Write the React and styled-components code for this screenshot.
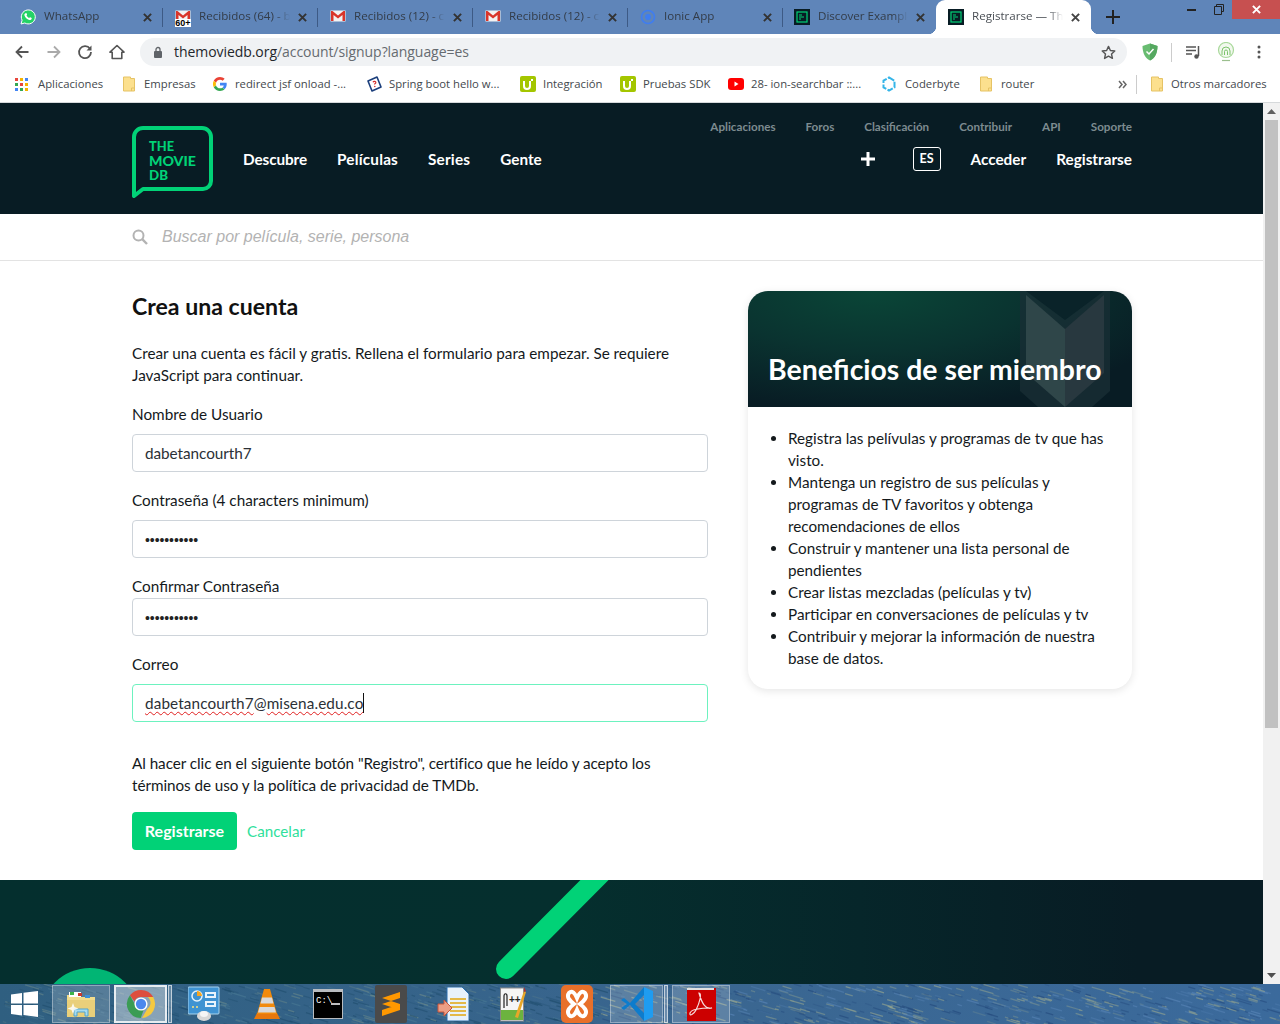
import React from "react";
import styled, { createGlobalStyle } from "styled-components";

const Global = createGlobalStyle`
  html, body { margin: 0; padding: 0; height: 100%; overflow: hidden; background: #fff; }
  * { box-sizing: border-box; }
  #root { width: 1280px; height: 1024px; }
`;
const BODY = `"Lato", "Open Sans", sans-serif`;
const UI = `"Open Sans", "Noto Sans", sans-serif`;

const Screen = styled.div`display:flex;flex-direction:column;width:1280px;height:1024px;overflow:hidden;font-family:${BODY};`;

/* ---------- browser chrome ---------- */
const TabStrip = styled.div`display:flex;align-items:stretch;height:34px;background:#5f85b9;padding-left:8px;flex:none;position:relative;`;
const Tab = styled.div`
  width:${p => p.$w || 155}px;display:flex;align-items:center;padding:0 11px 0 ${p => p.$pl || 12}px;gap:8px;position:relative;
  font:11.6px/16px ${UI};color:#333c48;
  ${p => p.$sep ? `&:after{content:"";position:absolute;right:0;top:8px;height:19px;width:1px;background:#3d5a85;}` : ""}
  ${p => p.$active ? `background:#fff;border-radius:9px 9px 0 0;color:#4a4f55;
    &:before{content:"";position:absolute;left:-8px;bottom:0;width:8px;height:8px;background:radial-gradient(circle at 0 0,transparent 8px,#fff 8.5px);}
    &:after{content:"";position:absolute;right:-8px;bottom:0;width:8px;height:8px;background:radial-gradient(circle at 100% 0,transparent 8px,#fff 8.5px);}` : ""}
`;
const TabTitle = styled.span`
  flex:1;min-width:0;white-space:nowrap;overflow:hidden;padding-bottom:2px;
  -webkit-mask-image:linear-gradient(90deg,#000 84%,transparent 100%);mask-image:linear-gradient(90deg,#000 84%,transparent 100%);
`;
const TabIconBox = styled.span`width:16px;height:16px;flex:none;display:flex;`;
const NewTab = styled.div`width:44px;display:flex;align-items:center;justify-content:center;`;
const WinControls = styled.div`margin-left:auto;display:flex;align-items:flex-start;height:19px;`;
const WinBtn = styled.div`width:${p => p.$w}px;height:19px;display:flex;align-items:center;justify-content:center;background:${p => p.$red ? "#c75050" : "transparent"};`;

const Toolbar = styled.div`display:flex;align-items:center;height:34px;background:#fff;flex:none;padding:4px 0 2px 14px;`;
const NavBtn = styled.div`width:31.5px;height:20px;display:flex;align-items:center;justify-content:flex-start;`;
const Omni = styled.div`
  width:987px;height:28px;border-radius:14px;background:#f0f2f4;display:flex;align-items:center;flex:none;
  padding:0 11px 0 13px;font:14px/18px ${UI};color:#666b70;
  b{font-weight:400;color:#23272b;}
`;
const UrlText = styled.span`margin-left:11px;flex:1;letter-spacing:-.06px;`;
const ExtArea = styled.div`display:flex;align-items:center;margin-left:15px;`;
const ExtDivider = styled.span`width:1px;height:19px;background:#ccc;margin:0 13px 0 13px;`;
const ExtGap = styled.span`width:${p => p.$w}px;flex:none;`;

const Bookmarks = styled.div`display:flex;align-items:center;height:35px;background:#fff;flex:none;padding:0 0 2px 15px;border-bottom:1px solid #d6d9db;font:11.3px/16px ${UI};color:#43484d;`;
const Mark = styled.div`width:${p => p.$w}px;flex:none;display:flex;align-items:center;gap:${p => p.$gap ?? 9}px;white-space:nowrap;svg{flex:none;}`;
const More = styled.div`margin-left:auto;display:flex;align-items:center;padding-right:14px;`;
const MarkDivider = styled.span`width:1px;height:19px;background:#ccc;margin:0 13px 0 9px;`;

/* ---------- site ---------- */
const Viewport = styled.div`flex:1;min-height:0;display:flex;`;
const Page = styled.div`flex:1;min-width:0;overflow:hidden;display:flex;flex-direction:column;background:#fff;`;
const Container = styled.div`width:1000px;margin-left:132px;`;
const SiteHeader = styled.header`height:111px;background:#081c24;flex:none;`;
const HeaderInner = styled(Container)`display:flex;justify-content:space-between;height:111px;`;
const HeaderLeft = styled.div`display:flex;align-items:flex-start;padding-top:23px;`;
const MainNav = styled.nav`display:flex;gap:30px;margin-left:30px;height:66px;align-items:center;`;
const NavLink = styled.span`font:700 15.3px/22px ${BODY};letter-spacing:${p => p.$ls || 0}px;color:#fff;`;
const HeaderRight = styled.div`display:flex;flex-direction:column;align-items:flex-end;`;
const SubNav = styled.div`display:flex;gap:30px;height:48px;align-items:center;`;
const SubLink = styled.span`font:700 11.65px/16px ${BODY};color:#7d8b90;`;
const MainRow = styled.div`display:flex;align-items:center;gap:30px;height:24px;margin-top:-4px;`;
const LangBox = styled.span`width:28px;height:24px;border:1px solid #fff;border-radius:3px;display:flex;align-items:center;justify-content:center;font:700 12.5px/16px ${BODY};color:#fff;margin-left:8px;`;

const SearchBar = styled.div`height:47px;flex:none;border-bottom:1px solid #e3e3e3;`;
const SearchInner = styled(Container)`height:46px;display:flex;align-items:center;gap:14px;font:italic 16px/20px "Liberation Sans",Arial,sans-serif;color:#b3b3b3;`;

const Content = styled(Container)`display:flex;justify-content:space-between;padding-top:30px;height:619px;flex:none;`;
const FormCol = styled.section`width:576px;`;
const Title = styled.h2`margin:-1px 0 0;font:700 23.1px/32px ${BODY};color:#111;`;
const Para = styled.p`margin:${p => p.$top}px 0 0;font:400 15.25px/22px ${BODY};letter-spacing:${p => p.$ls || 0}px;color:#14191c;white-space:nowrap;`;
const Label = styled.div`margin-top:${p => p.$top}px;font:400 15.3px/22px ${BODY};color:#14191c;`;
const Input = styled.div`
  margin-top:${p => p.$top}px;width:576px;height:38px;border:1px solid ${p => p.$focus ? "#6df2bf" : "#ced4da"};border-radius:4px;
  display:flex;align-items:center;padding:0 12px;font:400 15.3px/22px ${BODY};letter-spacing:${p => p.$focus ? .11 : -.05}px;color:#2b3036;white-space:pre;
`;
const Wavy = styled.span`text-decoration:underline wavy #e02020 1px;text-underline-offset:2px;`;
const Caret = styled.span`display:inline-block;width:1px;height:20px;background:#111;`;
const Dots = styled.span`font:400 14px/22px "Liberation Sans",Arial,sans-serif;letter-spacing:-.08px;color:#222;position:relative;top:1px;`;
const Actions = styled.div`display:flex;align-items:center;gap:10px;margin-top:16px;`;
const Primary = styled.button`width:105px;height:38px;border:0;border-radius:4px;background:#01d277;color:#fff;font:700 16px/22px ${BODY};padding:0;`;
const Cancel = styled.span`font:400 15.2px/22px ${BODY};color:#2fdf9c;`;

const Card = styled.aside`width:384px;height:398px;border-radius:20px;overflow:hidden;box-shadow:0 2px 8px rgba(0,0,0,.1);background:#fff;`;
const CardHead = styled.div`
  height:116px;position:relative;overflow:hidden;display:flex;align-items:flex-end;padding:0 20px 20px;
  background:radial-gradient(ellipse 320px 120px at 125px 0,#0a4637 0%,#0a3330 50%,#081c24 100%);
`;
const Shield = styled.svg`position:absolute;right:22px;top:0;`;
const CardTitle = styled.h3`margin:0;position:relative;font:700 28.4px/36px ${BODY};color:#fff;white-space:nowrap;`;
const CardList = styled.ul`margin:0;padding:20px 20px 0 40px;font:400 15.25px/22px ${BODY};color:#14191c;`;

const Footer = styled.footer`
  flex:1;min-height:0;position:relative;overflow:hidden;
  background:linear-gradient(90deg,#042f2e 0%,#052f2e 45%,#06262a 68%,#081c24 90%);
`;
const FooterArt = styled.svg`position:absolute;left:0;top:0;`;

const Scrollbar = styled.div`width:17px;flex:none;background:#f1f1f1;display:flex;flex-direction:column;align-items:center;`;
const ScrollArrow = styled.div`height:17px;flex:none;display:flex;align-items:center;justify-content:center;`;
const Thumb = styled.div`width:13px;height:608px;background:#c1c1c1;flex:none;`;
const ScrollGap = styled.div`flex:1;`;

/* ---------- taskbar ---------- */
const Taskbar = styled.div`height:40px;flex:none;position:relative;overflow:hidden;display:flex;align-items:center;background:linear-gradient(90deg,#2f5f80,#3a6690 55%,#3b6a9c);`;
const Wallpaper = styled.svg`position:absolute;left:0;top:0;`;
const TaskSlot = styled.div`
  position:relative;flex:none;width:${p => p.$w}px;margin-left:${p => p.$m || 0}px;height:38px;display:flex;align-items:center;justify-content:center;
  ${p => p.$box ? `border:1px solid rgba(255,255,255,.35);background:rgba(255,255,255,.18);` : ""}
  ${p => p.$on ? `border:2px solid rgba(255,255,255,.8);background:rgba(255,255,255,.42);` : ""}
`;
const Sliver = styled.div`position:relative;flex:none;width:4px;height:38px;margin-left:1px;border:1px solid rgba(255,255,255,.6);background:rgba(255,255,255,.25);`;

/* ---------- icons ---------- */
const X = ({ c = "#333" }) => <svg width="9" height="9" viewBox="0 0 10 10" style={{ flex: "none" }}><path d="M1 1l8 8M9 1l-8 8" stroke={c} strokeWidth="2.200" /></svg>;
const Whats = () => <svg width="16" height="16" viewBox="0 0 16 16"><path d="M1 15l1.100-3.800A7 7 0 1 1 4.800 14z" fill="#25d366" stroke="#fff" strokeWidth="1" /><path d="M5.600 4.200c.6-.5 1 0 1.300.7.3.6.3.8-.4 1.600.5 1 1.300 1.800 2.600 2.400.7-.8 1-.8 1.600-.4.8.4 1.200.7 1 1.200-.5 1.200-1.700 1.500-3 1-2.200-.8-3.600-2.400-4.200-4.200-.3-1-.2-1.700 1.100-2.300z" fill="#fff" /></svg>;
const Gmail = ({ badge }) => <svg width="16" height="18" viewBox="0 0 16 18"><rect x=".5" y="1.500" width="15" height="11" fill="#f2f2f2" /><path d="M1 2v10h2.500V6L8 9.500 12.500 6v6H15V2h-1.500L8 6.500 2.500 2z" fill="#d9352a" />{badge && <rect x="0" y="10" width="16" height="8" fill="#fff" />}{badge && <text x="8" y="17" textAnchor="middle" fontFamily="Liberation Sans" fontSize="9" fontWeight="700" fill="#000">60+</text>}</svg>;
const Ionic = () => <svg width="16" height="16" viewBox="0 0 16 16"><circle cx="8" cy="8" r="6.500" fill="none" stroke="#3f7df0" strokeWidth="1.600" /><circle cx="8" cy="8" r="3" fill="#3f7df0" /></svg>;
const Tmdb = () => <svg width="16" height="16" viewBox="0 0 16 16"><rect width="16" height="16" fill="#081c24" /><rect x="3" y="3" width="10" height="10" fill="none" stroke="#01d277" strokeWidth="1.200" /><path d="M5 6h3M5 8h5M5 10h2" stroke="#01d277" strokeWidth="1.200" /></svg>;
const Arrow = ({ c, flip }) => <svg width="16" height="16" viewBox="0 0 16 16" style={flip ? { transform: "scaleX(-1)" } : undefined}><path d="M14.500 8H2.500M8 2.500L2.500 8 8 13.500" fill="none" stroke={c} strokeWidth="1.800" /></svg>;
const Reload = () => <svg width="16" height="16" viewBox="0 0 16 16"><path d="M13 4.800A6 6 0 1 0 14 8" fill="none" stroke="#555" strokeWidth="1.800" /><path d="M14.500 1.500v5h-5z" fill="#555" /></svg>;
const Home = () => <svg width="16" height="16" viewBox="0 0 16 16"><path d="M8 1.500L1 8.200h2.200V14.500h9.600V8.200H15z" fill="none" stroke="#555" strokeWidth="1.600" strokeLinejoin="round" /></svg>;
const Lock = () => <svg width="10" height="13" viewBox="0 0 10 13"><rect x="1" y="5" width="8" height="7" rx="1" fill="#5f6368" /><path d="M3 5V3.500a2 2 0 0 1 4 0V5" fill="none" stroke="#5f6368" strokeWidth="1.300" /></svg>;
const Star = () => <svg width="15" height="15" viewBox="0 0 16 16"><path d="M8 1.500l2 4.400 4.700.5-3.500 3.200 1 4.700L8 11.900l-4.200 2.400 1-4.700L1.300 6.400 6 5.900z" fill="none" stroke="#555" strokeWidth="1.500" strokeLinejoin="round" /></svg>;
const Guard = () => <svg width="16" height="18" viewBox="0 0 16 18"><path d="M8 .5l7.500 2.500C15.500 10 13 15 8 17.500 3 15 .5 10 .5 3z" fill="#68bc71" /><path d="M8 .5l7.500 2.500C15.500 10 13 15 8 17.500z" fill="#55a860" /><path d="M4.500 8.500l2.500 2.500 4.500-5" fill="none" stroke="#fff" strokeWidth="1.500" /></svg>;
const Queue = () => <svg width="16" height="16" viewBox="0 0 16 16"><path d="M1 3h10M1 6.500h10M1 10h6" stroke="#555" strokeWidth="1.500" /><path d="M13.500 2v10" stroke="#555" strokeWidth="1.500" /><circle cx="11.500" cy="12.500" r="2.200" fill="#555" /></svg>;
const Ext = () => <svg width="18" height="20" viewBox="0 0 18 20"><circle cx="9" cy="8" r="7.500" fill="#f2f8ee" stroke="#a8d89a" strokeWidth="1.200" /><path d="M5 13V9a4 4 0 0 1 8 0v4M7.500 13V9.500a1.500 1.500 0 0 1 3 0V13" fill="none" stroke="#7cc46c" strokeWidth="1" /><path d="M5 18.500h8" stroke="#9bbf8e" strokeWidth="1.200" /></svg>;
const Kebab = () => <svg width="4" height="14" viewBox="0 0 4 14"><circle cx="2" cy="2" r="1.500" fill="#555" /><circle cx="2" cy="7" r="1.500" fill="#555" /><circle cx="2" cy="12" r="1.500" fill="#555" /></svg>;
const Apps = () => <svg width="13" height="13" viewBox="0 0 13 13">{["#e8453c", "#f4b400", "#4285f4", "#34a853", "#e8453c", "#f4b400", "#4285f4", "#34a853", "#f4b400"].map((c, i) => <rect key={i} x={(i % 3) * 5} y={Math.floor(i / 3) * 5} width="3" height="3" fill={c} />)}</svg>;
const Folder = () => <svg width="14" height="16" viewBox="0 0 14 16"><path d="M1.500 1h7v1.500h4v12.500h-11z" fill="#fce08e" stroke="#e6c365" /><path d="M9.500 15v-3h3" fill="none" stroke="#e6c365" /></svg>;
const Goog = () => <svg width="14" height="14" viewBox="0 0 48 48"><path fill="#ea4335" d="M24 9.500c3.500 0 6.600 1.200 9.100 3.600l6.800-6.800C35.800 2.400 30.400 0 24 0 14.600 0 6.500 5.400 2.600 13.200l7.900 6.200C12.400 13.700 17.700 9.500 24 9.500z" /><path fill="#4285f4" d="M47 24.500c0-1.600-.1-3.100-.4-4.500H24v9h13c-.6 3-2.200 5.500-4.700 7.200l7.300 5.700C44 37.800 47 31.700 47 24.500z" /><path fill="#fbbc05" d="M10.500 28.600A14.500 14.500 0 0 1 10.500 19.400l-7.900-6.200a24 24 0 0 0 0 21.600z" /><path fill="#34a853" d="M24 48c6.500 0 11.900-2.100 15.600-5.800l-7.300-5.700c-2 1.400-4.700 2.200-8.300 2.200-6.300 0-11.600-4.200-13.500-9.900l-7.900 6.200C6.500 42.600 14.600 48 24 48z" /></svg>;
const Spring = () => <svg width="16" height="16" viewBox="0 0 16 16"><path d="M2 5l9-4 4 10-9 4z" fill="#fff" stroke="#1c3f7c" strokeWidth="1.600" strokeLinejoin="round" /><path d="M7 6.300c.5-1.500 3-1.300 2.800.3-.1.900-1.300 1-1.300 2" fill="none" stroke="#d5322e" strokeWidth="1.200" /><circle cx="8.800" cy="10.500" r=".8" fill="#d5322e" /></svg>;
const UIcon = () => <svg width="16" height="16" viewBox="0 0 16 16"><rect width="16" height="16" rx="2" fill="#a4c600" /><path d="M4 5v5a3 3 0 0 0 6 0V5" fill="none" stroke="#fff" strokeWidth="2" /><path d="M12 3v2" stroke="#fff" strokeWidth="2" /></svg>;
const Yt = () => <svg width="16" height="14" viewBox="0 0 16 14"><rect y="1" width="16" height="12" rx="3" fill="#f00" /><path d="M6.500 4.500l4 2.500-4 2.500z" fill="#fff" /></svg>;
const Coder = () => <svg width="14" height="16" viewBox="0 0 14 16"><path d="M7 1.500l5.500 3.200v6.600L7 14.500 1.500 11.300V4.700z" fill="none" stroke="#35b5e8" strokeWidth="2" strokeDasharray="6 1.500" /></svg>;
const Chevrons = () => <svg width="9" height="9" viewBox="0 0 9 9"><path d="M1 1l3 3.500-3 3.500M5 1l3 3.500-3 3.500" fill="none" stroke="#666" strokeWidth="1.500" /></svg>;
const Search = () => <svg width="16" height="16" viewBox="0 0 16 16" style={{ flex: "none" }}><circle cx="6.500" cy="6.500" r="5" fill="none" stroke="#b3b3b3" strokeWidth="2" /><path d="M10.200 10.200l4.800 4.800" stroke="#b3b3b3" strokeWidth="2.400" /></svg>;
const Plus = () => <svg width="14" height="14" viewBox="0 0 14 14"><path d="M7 0v14M0 7h14" stroke="#fff" strokeWidth="3" /></svg>;

const Logo = () => (
  <svg width="81" height="72" viewBox="0 0 81 72" style={{ flex: "none" }}>
    <path d="M2 70V11a9 9 0 0 1 9-9h59a9 9 0 0 1 9 9v44a8 8 0 0 1-8 8H11z" fill="none" stroke="#01d277" strokeWidth="4" strokeLinejoin="round" />
    <g fontFamily="Lato, sans-serif" fontWeight="900" fontSize="14" fill="#01d277">
      <text x="17" y="25" textLength="25" lengthAdjust="spacingAndGlyphs">THE</text>
      <text x="17" y="39.500" textLength="47" lengthAdjust="spacingAndGlyphs">MOVIE</text>
      <text x="17" y="53.500" textLength="19" lengthAdjust="spacingAndGlyphs">DB</text>
    </g>
  </svg>
);

const ChromeLogo = () => <svg width="30" height="30" viewBox="0 0 32 32"><path d="M16 1a15 15 0 0 1 13 7.500H16a7.500 7.500 0 0 0-7 4.700L4.200 6.700A15 15 0 0 1 16 1z" fill="#dd4e3e" /><path d="M29 8.500A15 15 0 0 1 17 31l6-10.300a7.500 7.500 0 0 0 0-12.200z" fill="#f5c93f" /><path d="M4.200 6.700L9.800 17a7.500 7.500 0 0 0 9 5.500L15.700 31A15 15 0 0 1 4.200 6.700z" fill="#3b9c54" /><circle cx="16" cy="16" r="7" fill="#fff" /><circle cx="16" cy="16" r="5.500" fill="#4b88ee" /></svg>;
const Explorer = () => <svg width="32" height="32" viewBox="0 0 32 32"><path d="M2 7h12l2 2h14v20H2z" fill="#f1dc8c" /><path d="M4 4h12v5H4z" fill="#fff" /><rect x="5" y="4" width="4" height="3" fill="#3cb34a" /><rect x="13" y="5" width="4" height="3" fill="#c9382c" /><rect x="20" y="7" width="5" height="3" fill="#3b8fd8" /><path d="M2 12h28v17H2z" fill="#e9cf7a" /><path d="M9 28v-7h14v7h-3v-4h-8v4z" fill="#a8dcf0" stroke="#4fa3cf" strokeWidth="1" /><path d="M8 15l1.500 4 4 1.500-4 1.500L8 26l-1.500-4-4-1.500 4-1.500z" fill="#fff" opacity=".85" /></svg>;
const Control = () => <svg width="32" height="36" viewBox="0 0 32 36"><rect x="0" y="1" width="31" height="27" rx="1" fill="#3f93d2" stroke="#a8d4ee" /><circle cx="9" cy="10" r="5" fill="none" stroke="#e8f4fc" strokeWidth="1.500" /><path d="M9 5a5 5 0 0 1 5 5H9z" fill="#f5a623" /><rect x="17" y="6" width="11" height="6" fill="#e8f4fc" /><rect x="17" y="15" width="11" height="6" fill="#e8f4fc" /><rect x="19" y="8" width="7" height="2" fill="#3f93d2" /><rect x="19" y="17" width="7" height="2" fill="#3f93d2" /><circle cx="5" cy="21" r="1" fill="#ffe27a" /><circle cx="9" cy="21" r="1" fill="#ffe27a" /><ellipse cx="16" cy="30" rx="7" ry="5" fill="#d8d8d8" /><ellipse cx="16" cy="28" rx="4" ry="3" fill="#f5f5f5" /></svg>;
const Vlc = () => <svg width="28" height="32" viewBox="0 0 28 32"><path d="M1 31l3-6h20l3 6z" fill="#e8780c" /><path d="M11 1h6l7 25H4z" fill="#f28a0b" /><path d="M9 9.500h10l1.500 6h-13zM6.500 19h15l1.500 5.500H5z" fill="#d9d9d9" /></svg>;
const Cmd = () => <svg width="30" height="30" viewBox="0 0 30 30"><rect width="30" height="30" fill="#b8bcc0" /><rect x="1" y="3" width="28" height="26" fill="#000" /><text x="3" y="14" fontFamily="Liberation Mono" fontSize="9" fill="#fff">C:\</text><path d="M18 15h9" stroke="#fff" strokeWidth="1.500" /></svg>;
const Sublime = () => <svg width="32" height="38" viewBox="0 0 32 38"><rect width="32" height="38" rx="2" fill="#4a4a4a" /><path d="M7 13l18-6v6L7 19zM25 19L7 25v6l18-6zM7 19l18 6v-6L7 13z" fill="#ff9800" /></svg>;
const Notepad = () => <svg width="32" height="34" viewBox="0 0 32 34"><path d="M10 0h15l7 7v27H10z" fill="#e8f2fb" stroke="#2a6fb0" /><path d="M13 12h16M13 16h16M13 20h16M13 24h16M13 28h16" stroke="#e3b949" strokeWidth="2" /><path d="M1 17h6v-4l8 8-8 8v-4H1z" fill="#ed9e85" stroke="#c8553a" /></svg>;
const NppIcon = () => <svg width="26" height="36" viewBox="0 0 26 36"><rect x=".5" y="2" width="23" height="33" fill="#f5f5f5" stroke="#888" /><rect x="1" y="24" width="22" height="10" fill="#6cb33f" /><path d="M4 22V10c0-3 3-3 3 0v10" fill="none" stroke="#222" strokeWidth="1.200" /><text x="9" y="17" fontFamily="Liberation Sans" fontWeight="700" fontSize="10" fill="#222">++</text><path d="M15 31l9-26 2 1-8 26z" fill="#e8a628" /><path d="M24 1l2 4-2 1z" fill="#b03030" /></svg>;
const Xampp = () => <svg width="32" height="38" viewBox="0 0 32 38"><rect width="32" height="38" rx="5" fill="#e8702a" /><path d="M8 8c3-3 6 0 8 5 2-5 5-8 8-5 3 4-1 8-5 11 4 3 8 7 5 11-3 3-6 0-8-5-2 5-5 8-8 5-3-4 1-8 5-11-4-3-8-7-5-11z" fill="none" stroke="#fff" strokeWidth="4" /></svg>;
const VsCode = () => <svg width="32" height="36" viewBox="0 0 32 36"><path d="M23 1l9 4v26l-9 4z" fill="#1f9cf0" /><path d="M23 1L9 17 3 12 0 14l6 4-6 4 3 2 6-5 14 16v-8l-9-9 9-9z" fill="#0d7ccc" /></svg>;
const Acrobat = () => <svg width="29" height="33" viewBox="0 0 29 33"><rect y="0" width="29" height="33" fill="#c00" /><rect width="27" height="2" fill="#e0e0e0" /><path d="M12 5c3 0 1 9-3 17-2 4-7 7-6 3 1-3 8-5 22-5-6 2-10-4-13-15z" fill="none" stroke="#f6dada" strokeWidth="1.200" /></svg>;
const Windows = () => <svg width="27" height="26" viewBox="0 0 27 26"><path d="M0 3.500l11-1.500v10.500H0zM12.500 1.800L27 0v12.500H12.500zM0 14h11v10.500L0 23zM12.500 14H27v12l-14.500-2z" fill="#fff" /></svg>;

const seed = (() => { let s = 12345; return () => (s = (s * 16807) % 2147483647) / 2147483647; })();
const FLECKS = Array.from({ length: 1000 }, () => {
  const x = seed() * 1280, y = seed() * 40, l = 3 + seed() * 12, k = seed();
  const c = x > 600 ? (k < .4 ? "#9ba98f" : k < .75 ? "#23497c" : "#5a86b8") : (k < .25 ? "#6f8c8a" : k < .72 ? "#1e4c6c" : "#4a7a94");
  return { x, y, l, c, o: .2 + seed() * .45 };
});

const TABS = [
  { icon: <Whats />, title: "WhatsApp" },
  { icon: <Gmail badge />, title: "Recibidos (64) - b" },
  { icon: <Gmail />, title: "Recibidos (12) - c" },
  { icon: <Gmail />, title: "Recibidos (12) - c" },
  { icon: <Ionic />, title: "Ionic App" },
];
const SUB = ["Aplicaciones", "Foros", "Clasificación", "Contribuir", "API", "Soporte"];
const BENEFITS = [
  "Registra las pelívulas y programas de tv que has visto.",
  "Mantenga un registro de sus películas y programas de TV favoritos y obtenga recomendaciones de ellos",
  "Construir y mantener una lista personal de pendientes",
  "Crear listas mezcladas (películas y tv)",
  "Participar en conversaciones de películas y tv",
  "Contribuir y mejorar la información de nuestra base de datos.",
];

export default function App() {
  return (
    <Screen>
      <Global />
      <TabStrip>
        {TABS.map((t, i) => (
          <Tab key={i} $sep>
            <TabIconBox>{t.icon}</TabIconBox>
            <TabTitle>{t.title}</TabTitle>
            <X />
          </Tab>
        ))}
        <Tab $w={153} $pl={11}><TabIconBox><Tmdb /></TabIconBox><TabTitle>Discover Examples</TabTitle><X /></Tab>
        <Tab $w={155} $active><TabIconBox><Tmdb /></TabIconBox><TabTitle>Registrarse — The</TabTitle><X c="#444" /></Tab>
        <NewTab><svg width="14" height="14" viewBox="0 0 14 14"><path d="M7 0v14M0 7h14" stroke="#222" strokeWidth="2" /></svg></NewTab>
        <WinControls>
          <WinBtn $w={27}><svg width="9" height="3"><rect width="9" height="2" y="1" fill="#222" /></svg></WinBtn>
          <WinBtn $w={27}><svg width="10" height="11" viewBox="0 0 10 11"><path d="M2.500 2.500V.5h7v7h-2M.5 2.500h7v8h-7z" fill="none" stroke="#222" /></svg></WinBtn>
          <WinBtn $w={48} $red><X c="#fff" /></WinBtn>
        </WinControls>
      </TabStrip>

      <Toolbar>
        <NavBtn><Arrow c="#555" /></NavBtn>
        <NavBtn><Arrow c="#aaa" flip /></NavBtn>
        <NavBtn><Reload /></NavBtn>
        <NavBtn><Home /></NavBtn>
        <Omni>
          <Lock />
          <UrlText><b>themoviedb.org</b>/account/signup?language=es</UrlText>
          <Star />
        </Omni>
        <ExtArea>
          <Guard />
          <ExtDivider />
          <Queue />
          <ExtGap $w={16} />
          <Ext />
          <ExtGap $w={22} />
          <Kebab />
        </ExtArea>
      </Toolbar>

      <Bookmarks>
        <Mark $w={107} $gap={10}><Apps />Aplicaciones</Mark>
        <Mark $w={91} $gap={8}><Folder />Empresas</Mark>
        <Mark $w={153} $gap={8}><Goog />redirect jsf onload -...</Mark>
        <Mark $w={154} $gap={7}><Spring />Spring boot hello w...</Mark>
        <Mark $w={100} $gap={7}><UIcon />Integración</Mark>
        <Mark $w={108} $gap={7}><UIcon />Pruebas SDK</Mark>
        <Mark $w={154} $gap={7}><Yt />28- ion-searchbar ::...</Mark>
        <Mark $w={97} $gap={9}><Coder />Coderbyte</Mark>
        <Mark $w={60} $gap={8}><Folder />router</Mark>
        <More><Chevrons /><MarkDivider /><Mark $w={116} $gap={7}><Folder />Otros marcadores</Mark></More>
      </Bookmarks>

      <Viewport>
        <Page>
          <SiteHeader>
            <HeaderInner>
              <HeaderLeft>
                <Logo />
                <MainNav>
                  <NavLink $ls={-.1}>Descubre</NavLink>
                  <NavLink $ls={.2}>Películas</NavLink>
                  <NavLink $ls={.2}>Series</NavLink>
                  <NavLink>Gente</NavLink>
                </MainNav>
              </HeaderLeft>
              <HeaderRight>
                <SubNav>{SUB.map(s => <SubLink key={s}>{s}</SubLink>)}</SubNav>
                <MainRow>
                  <Plus />
                  <LangBox>ES</LangBox>
                  <NavLink>Acceder</NavLink>
                  <NavLink>Registrarse</NavLink>
                </MainRow>
              </HeaderRight>
            </HeaderInner>
          </SiteHeader>

          <SearchBar>
            <SearchInner><Search />Buscar por película, serie, persona</SearchInner>
          </SearchBar>

          <Content>
            <FormCol>
              <Title>Crea una cuenta</Title>
              <Para $top={20}>Crear una cuenta es fácil y gratis. Rellena el formulario para empezar. Se requiere<br />JavaScript para continuar.</Para>
              <Label $top={17}>Nombre de Usuario</Label>
              <Input $top={9}>dabetancourth7</Input>
              <Label $top={17}>Contraseña (4 characters minimum)</Label>
              <Input $top={9}><Dots>•••••••••••</Dots></Input>
              <Label $top={17}>Confirmar Contraseña</Label>
              <Input $top={1}><Dots>•••••••••••</Dots></Input>
              <Label $top={17}>Correo</Label>
              <Input $top={9} $focus><Wavy>dabetancourth7</Wavy>@<Wavy>misena.edu.co</Wavy><Caret /></Input>
              <Para $top={30} $ls={-.05}>Al hacer clic en el siguiente botón "Registro", certifico que he leído y acepto los<br />términos de uso y la política de privacidad de TMDb.</Para>
              <Actions>
                <Primary>Registrarse</Primary>
                <Cancel>Cancelar</Cancel>
              </Actions>
            </FormCol>
            <Card>
              <CardHead>
                <Shield width="90" height="116" viewBox="0 0 90 116">
                  <path d="M0 0h90v100l-45 40-45-40z" fill="#1a2f35" opacity=".75" />
                  <path d="M6 0l39 29 39-29z" fill="#0a2329" />
                  <path d="M6 4l39 34v78L6 82z" fill="#2f4649" />
                  <path d="M84 4L45 38v78l39-34z" fill="#28383f" />
                </Shield>
                <CardTitle>Beneficios de ser miembro</CardTitle>
              </CardHead>
              <CardList>{BENEFITS.map(b => <li key={b}>{b}</li>)}</CardList>
            </Card>
          </Content>

          <Footer>
            <FooterArt width="1263" height="104" viewBox="0 0 1263 104">
              <circle cx="90" cy="138" r="50" fill="#01b574" />
              <path d="M600.500-6L506 89" stroke="#01d277" strokeWidth="20" strokeLinecap="round" />
            </FooterArt>
          </Footer>
        </Page>
        <Scrollbar>
          <ScrollArrow><svg width="9" height="5"><path d="M4.500 0L9 5H0z" fill="#606060" /></svg></ScrollArrow>
          <Thumb />
          <ScrollGap />
          <ScrollArrow><svg width="9" height="5"><path d="M0 0h9L4.500 5z" fill="#505050" /></svg></ScrollArrow>
        </Scrollbar>
      </Viewport>

      <Taskbar>
        <Wallpaper width="1280" height="40" viewBox="0 0 1280 40">
          {FLECKS.map((f, i) => <path key={i} d={`M${f.x} ${f.y}l${f.l} ${f.l * .3}`} stroke={f.c} strokeWidth="1.300" opacity={f.o} />)}
        </Wallpaper>
        <TaskSlot $w={49}><Windows /></TaskSlot>
        <TaskSlot $w={58} $m={3} $box><Explorer /></TaskSlot>
        <TaskSlot $w={53} $m={4} $on><ChromeLogo /></TaskSlot>
        <Sliver />
        <TaskSlot $w={48} $m={8}><Control /></TaskSlot>
        <TaskSlot $w={28} $m={25}><Vlc /></TaskSlot>
        <TaskSlot $w={30} $m={32}><Cmd /></TaskSlot>
        <TaskSlot $w={32} $m={32}><Sublime /></TaskSlot>
        <TaskSlot $w={32} $m={30}><Notepad /></TaskSlot>
        <TaskSlot $w={26} $m={31}><NppIcon /></TaskSlot>
        <TaskSlot $w={32} $m={35}><Xampp /></TaskSlot>
        <TaskSlot $w={53} $m={17} $box><VsCode /></TaskSlot>
        <Sliver />
        <TaskSlot $w={58} $m={4} $box><Acrobat /></TaskSlot>
      </Taskbar>
    </Screen>
  );
}
